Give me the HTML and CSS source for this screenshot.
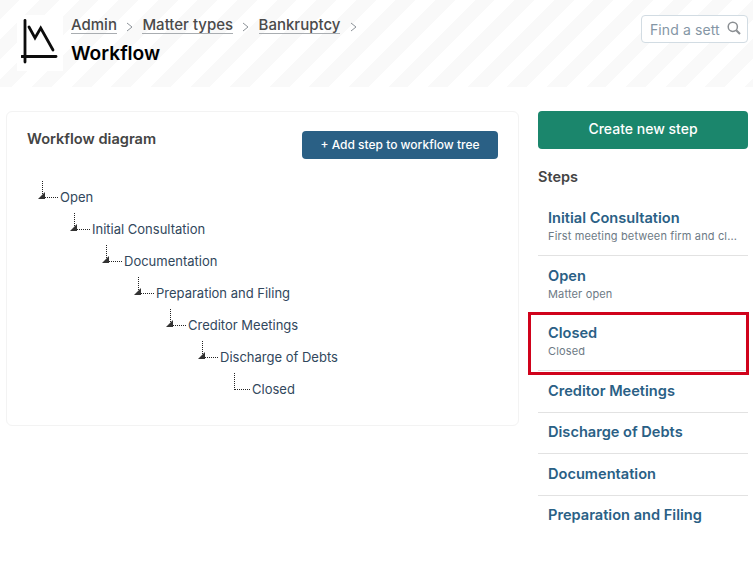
FILE: index.html
```html
<!DOCTYPE html>
<html lang="en">
<head>
<meta charset="utf-8">
<title>Workflow</title>
<link rel="stylesheet" href="styles.css">
</head>
<body>
<header class="topbar">
  <div class="brand">
    <div class="logo">
      <svg width="42" height="54" viewBox="0 0 42 54" fill="none" stroke="#0c0c0c" stroke-width="2.8" stroke-linecap="round" stroke-linejoin="miter">
        <path d="M4 4.5V46"/>
        <path d="M0.5 40.5H35"/>
        <path d="M8 11L14 22L19.7 12L32 34"/>
      </svg>
    </div>
    <div class="titles">
      <nav class="crumbs">
        <a class="crumb">Admin</a><span class="sep"><svg width="7" height="10" viewBox="0 0 7 10" fill="none" stroke="#8d9399" stroke-width="1"><path d="M1 1L6 5L1 9"/></svg></span>
        <a class="crumb">Matter types</a><span class="sep"><svg width="7" height="10" viewBox="0 0 7 10" fill="none" stroke="#8d9399" stroke-width="1"><path d="M1 1L6 5L1 9"/></svg></span>
        <a class="crumb">Bankruptcy</a><span class="sep"><svg width="7" height="10" viewBox="0 0 7 10" fill="none" stroke="#8d9399" stroke-width="1"><path d="M1 1L6 5L1 9"/></svg></span>
      </nav>
      <h1 class="page-title">Workflow</h1>
    </div>
  </div>
  <div class="search">
    <span class="search-text">Find a sett</span>
    <svg class="search-icon" width="14" height="14" viewBox="0 0 14 14" fill="none" stroke="#8b8f93" stroke-width="1.5"><circle cx="5.8" cy="5.8" r="4.6"/><path d="M9.2 9.2L13 13" stroke-width="2"/></svg>
  </div>
</header>
<main class="content">
  <section class="card">
    <div class="card-head">
      <h2 class="card-title">Workflow diagram</h2>
      <button class="btn-add">+ Add step to workflow tree</button>
    </div>
    <ul class="tree root">
      <li class="node"><span class="label">Open</span>
        <ul class="tree"><li class="node"><span class="label">Initial Consultation</span>
          <ul class="tree"><li class="node"><span class="label">Documentation</span>
            <ul class="tree"><li class="node"><span class="label">Preparation and Filing</span>
              <ul class="tree"><li class="node"><span class="label">Creditor Meetings</span>
                <ul class="tree"><li class="node"><span class="label">Discharge of Debts</span>
                  <ul class="tree"><li class="node leaf"><span class="label">Closed</span></li></ul>
                </li></ul>
              </li></ul>
            </li></ul>
          </li></ul>
        </li></ul>
      </li>
    </ul>
  </section>
  <aside class="side">
    <button class="btn-create">Create new step</button>
    <h2 class="side-title">Steps</h2>
    <ul class="steps">
      <li class="step"><div class="step-name">Initial Consultation</div><div class="step-desc">First meeting between firm and cl...</div></li>
      <li class="step"><div class="step-name">Open</div><div class="step-desc">Matter open</div></li>
      <li class="step highlighted"><div class="step-name">Closed</div><div class="step-desc">Closed</div></li>
      <li class="step"><div class="step-name">Creditor Meetings</div></li>
      <li class="step"><div class="step-name">Discharge of Debts</div></li>
      <li class="step"><div class="step-name">Documentation</div></li>
      <li class="step last"><div class="step-name">Preparation and Filing</div></li>
    </ul>
  </aside>
</main>
</body>
</html>
```
FILE: styles.css
```css
* { box-sizing: border-box; }
html, body { margin: 0; padding: 0; }
body {
  font-family: Inter, "Liberation Sans", sans-serif;
  background: #fff;
  color: #333;
  width: 753px;
  height: 561px;
  overflow: hidden;
}
.topbar {
  height: 87px;
  display: flex;
  justify-content: space-between;
  align-items: flex-start;
  padding: 15px 5px 0 17px;
  background: repeating-linear-gradient(135deg, #f9f9f9 0 14px, #fff 14px 28px);
}
.brand { display: flex; gap: 8px; }
.logo {
  width: 46px;
  height: 56px;
  background: #fff;
  display: flex;
  align-items: center;
  justify-content: center;
}
.logo svg { display: block; margin-left: 4px; }
.crumbs { display: flex; align-items: center; height: 20px; }
.crumb {
  font-size: 15px;
  font-weight: 500;
  color: #4a4a4a;
  line-height: 17px;
  border-bottom: 1px solid #a9adb1;
}
.sep { width: 25.5px; display: flex; justify-content: center; padding-top: 3px; }
.sep svg { display: block; }
.page-title {
  margin: 5px 0 0;
  font-size: 19.2px;
  line-height: 26px;
  font-weight: 600;
  color: #000;
}
.search {
  width: 107px;
  height: 28px;
  border: 1px solid #d2dce3;
  border-radius: 4px;
  background: #fff;
  display: flex;
  align-items: center;
  justify-content: space-between;
  padding: 0 6px 0 8px;
  overflow: hidden;
}
.search-text { font-size: 14px; color: #8496a5; white-space: nowrap; letter-spacing: 0.1px; }
.search-icon { flex: none; margin-bottom: 2px; }
.content {
  display: grid;
  grid-template-columns: 513px 210px;
  column-gap: 19px;
  padding: 24px 5px 0 6px;
  align-items: start;
}
.card {
  height: 315px;
  border: 1px solid #f3f3f3;
  border-radius: 6px;
  padding: 19px 20px 0 20px;
}
.card-head { display: flex; justify-content: space-between; align-items: flex-start; height: 50px; }
.card-title { margin: 1px 0 0; font-size: 14.6px; line-height: 15px; font-weight: 600; color: #444; }
.btn-add {
  font: 500 12px Inter, "Liberation Sans", sans-serif;
  width: 196px;
  height: 28px;
  border: 0;
  border-radius: 4px;
  background: #2a6085;
  color: #fff;
  padding: 0 0 2px;
}
.tree { list-style: none; margin: 0; padding: 0 0 0 32px; }
.tree.root { padding-left: 33px; }
.node { position: relative; }
.label { display: block; height: 32px; font-size: 13px; line-height: 32px; color: #31475c; }
.node::before {
  content: "";
  position: absolute;
  left: -18px;
  top: 0;
  width: 15px;
  height: 16px;
  border-left: 1px dotted #222;
  border-bottom: 1px dotted #222;
}
.node:not(.leaf)::after {
  content: "";
  position: absolute;
  left: -22px;
  top: 11px;
  width: 0;
  height: 0;
  border-style: solid;
  border-width: 0 0 7px 7px;
  border-color: transparent transparent #333 transparent;
}
.side { display: flex; flex-direction: column; }
.btn-create {
  font: 500 14px Inter, "Liberation Sans", sans-serif;
  height: 38px;
  border: 0;
  border-radius: 4px;
  background: #1b866c;
  color: #fff;
  padding: 0 0 4px;
}
.side-title { margin: 18px 0 11.5px; font-size: 14.5px; line-height: 20px; font-weight: 600; color: #444; }
.steps { list-style: none; margin: 0; padding: 0; }
.step { padding: 9.5px 0 10px 10px; border-bottom: 1px solid #e2e2e2; position: relative; }
.step.last { border-bottom: 0; }
.step-name { font-size: 14.6px; line-height: 21px; font-weight: 600; color: #2a6085; white-space: nowrap; }
.step-desc { font-size: 11px; line-height: 14px; padding-bottom: 2px; color: #6d7a85; white-space: nowrap; letter-spacing: 0.15px; }
.highlighted::after {
  content: "";
  position: absolute;
  left: -10px;
  right: -1px;
  top: -2px;
  bottom: -5px;
  border: 3px solid #d0021b;
}
```
